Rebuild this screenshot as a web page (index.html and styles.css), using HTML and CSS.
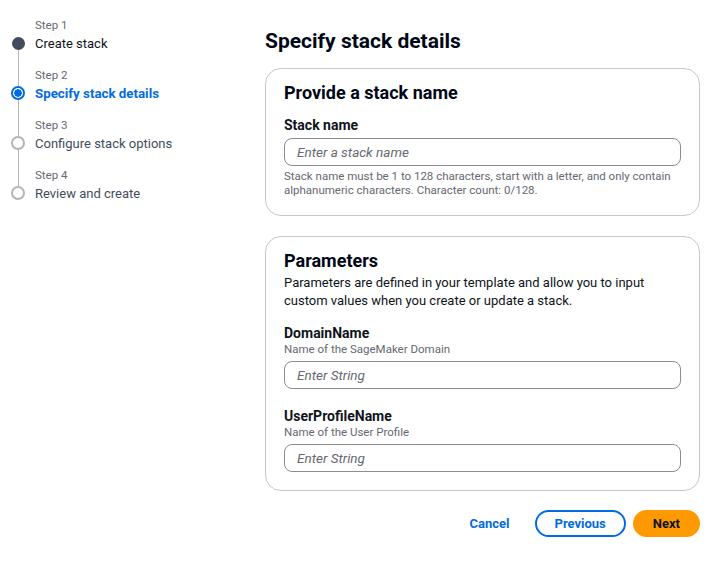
FILE: index.html
```html
<!DOCTYPE html>
<html lang="en">
<head>
<meta charset="utf-8">
<title>Specify stack details</title>
<link rel="stylesheet" href="styles.css">
</head>
<body>
<div class="layout">
  <nav class="steps">
    <div class="step done">
      <div class="rail"><span class="seg top hidden"></span><span class="dot"></span><span class="seg bottom"></span></div>
      <div class="step-text"><div class="step-num">Step 1</div><div class="step-label">Create stack</div></div>
    </div>
    <div class="step current">
      <div class="rail"><span class="seg top"></span><span class="dot"></span><span class="seg bottom"></span></div>
      <div class="step-text"><div class="step-num">Step 2</div><div class="step-label">Specify stack details</div></div>
    </div>
    <div class="step">
      <div class="rail"><span class="seg top"></span><span class="dot"></span><span class="seg bottom"></span></div>
      <div class="step-text"><div class="step-num">Step 3</div><div class="step-label">Configure stack options</div></div>
    </div>
    <div class="step">
      <div class="rail"><span class="seg top"></span><span class="dot"></span><span class="seg bottom hidden"></span></div>
      <div class="step-text"><div class="step-num">Step 4</div><div class="step-label">Review and create</div></div>
    </div>
  </nav>

  <main class="main">
    <h1 class="title">Specify stack details</h1>

    <section class="card">
      <h2 class="card-title">Provide a stack name</h2>
      <div class="field name-field">
        <label class="label">Stack name</label>
        <input class="input" type="text" placeholder="Enter a stack name">
        <p class="hint">Stack name must be 1 to 128 characters, start with a letter, and only contain alphanumeric characters. Character count: 0/128.</p>
      </div>
    </section>

    <section class="card">
      <h2 class="card-title">Parameters</h2>
      <p class="card-desc">Parameters are defined in your template and allow you to input custom values when you create or update a stack.</p>
      <div class="field param">
        <label class="label">DomainName</label>
        <div class="sub">Name of the SageMaker Domain</div>
        <input class="input" type="text" placeholder="Enter String">
      </div>
      <div class="field param">
        <label class="label">UserProfileName</label>
        <div class="sub">Name of the User Profile</div>
        <input class="input" type="text" placeholder="Enter String">
      </div>
    </section>

    <div class="actions">
      <button class="btn link">Cancel</button>
      <button class="btn outline">Previous</button>
      <button class="btn primary">Next</button>
    </div>
  </main>
</div>
</body>
</html>
```

FILE: styles.css
```css
* { box-sizing: border-box; }
html, body { margin: 0; padding: 0; background: #ffffff; }
body {
  font-family: Roboto, "Open Sans", sans-serif;
  color: #0f141a;
  font-size: 13px;
}
.layout {
  display: grid;
  grid-template-columns: 265px 435px;
}
/* steps */
.steps {
  padding: 17px 0 0 11px;
  display: flex;
  flex-direction: column;
}
.step {
  display: flex;
  gap: 10px;
}
.rail {
  width: 14px;
  display: flex;
  flex-direction: column;
  align-items: center;
}
.seg { width: 1px; background: #b4b4bb; }
.seg.top { height: 19px; }
.seg.bottom { height: 17px; }
.seg.hidden { background: transparent; }
.dot {
  width: 14px; height: 14px; border-radius: 50%;
  border: 2px solid #b4b4bb;
  background: #fff;
  flex: none;
}
.step.done .dot { background: #414d5c; border-color: #414d5c; width: 13px; height: 13px; margin: 0.5px 0; }
.step.current .dot {
  border-color: #006ce0;
  background: radial-gradient(circle, #006ce0 0 3.5px, #fff 4px);
}
.step-text { padding-bottom: 12px; }
.step-num { font-size: 11.5px; line-height: 16px; color: #656871; margin-bottom: 1px; }
.step-label { font-size: 13px; line-height: 20px; color: #414d5c; }
.step.done .step-label { color: #0f141a; }
.step.current .step-label { color: #006ce0; font-weight: 700; font-size: 13.3px; }

/* main */
.main { padding-top: 27px; }
.title { margin: 0 0 13px; font-size: 21px; line-height: 28px; font-weight: 700; color: #000716; }
.card {
  border: 1px solid #c6c6cd;
  border-radius: 16px;
  padding: 12px 18px 18px;
  margin-bottom: 20px;
}
.card-title { margin: 0; font-size: 18px; line-height: 24px; font-weight: 700; color: #000716; }
.field { display: flex; flex-direction: column; }
.name-field { margin-top: 10px; }
.label { font-size: 14px; line-height: 20px; font-weight: 700; }
.input {
  margin-top: 3px;
  height: 28px;
  border: 1px solid #8c8c94;
  border-radius: 8px;
  padding: 0 12px;
  font: inherit;
  font-size: 13.5px;
}
.input::placeholder { color: #656871; font-style: italic; }
.hint { margin: 3px 0 0; font-size: 11.5px; line-height: 14px; color: #656871; }
.card-desc { margin: 1px 0 0; font-size: 13px; line-height: 18px; }
.param { margin-top: 15px; }
.param + .param { margin-top: 19px; }
.param .label { line-height: 16px; }
.param .input { margin-top: 4px; }
.sub { font-size: 11.5px; line-height: 16px; color: #656871; }

.actions {
  display: flex;
  justify-content: flex-end;
  align-items: center;
  gap: 7px;
  margin-top: -1px;
}
.btn {
  font: inherit;
  font-weight: 700;
  font-size: 13px;
  height: 27px;
  border-radius: 14px;
  padding: 0 18px;
  cursor: pointer;
}
.btn.link { background: none; border: none; color: #006ce0; }
.btn.outline { background: #fff; border: 2px solid #006ce0; color: #006ce0; }
.btn.primary { background: #ff9900; border: 2px solid #ff9900; color: #0f141a; }
```
